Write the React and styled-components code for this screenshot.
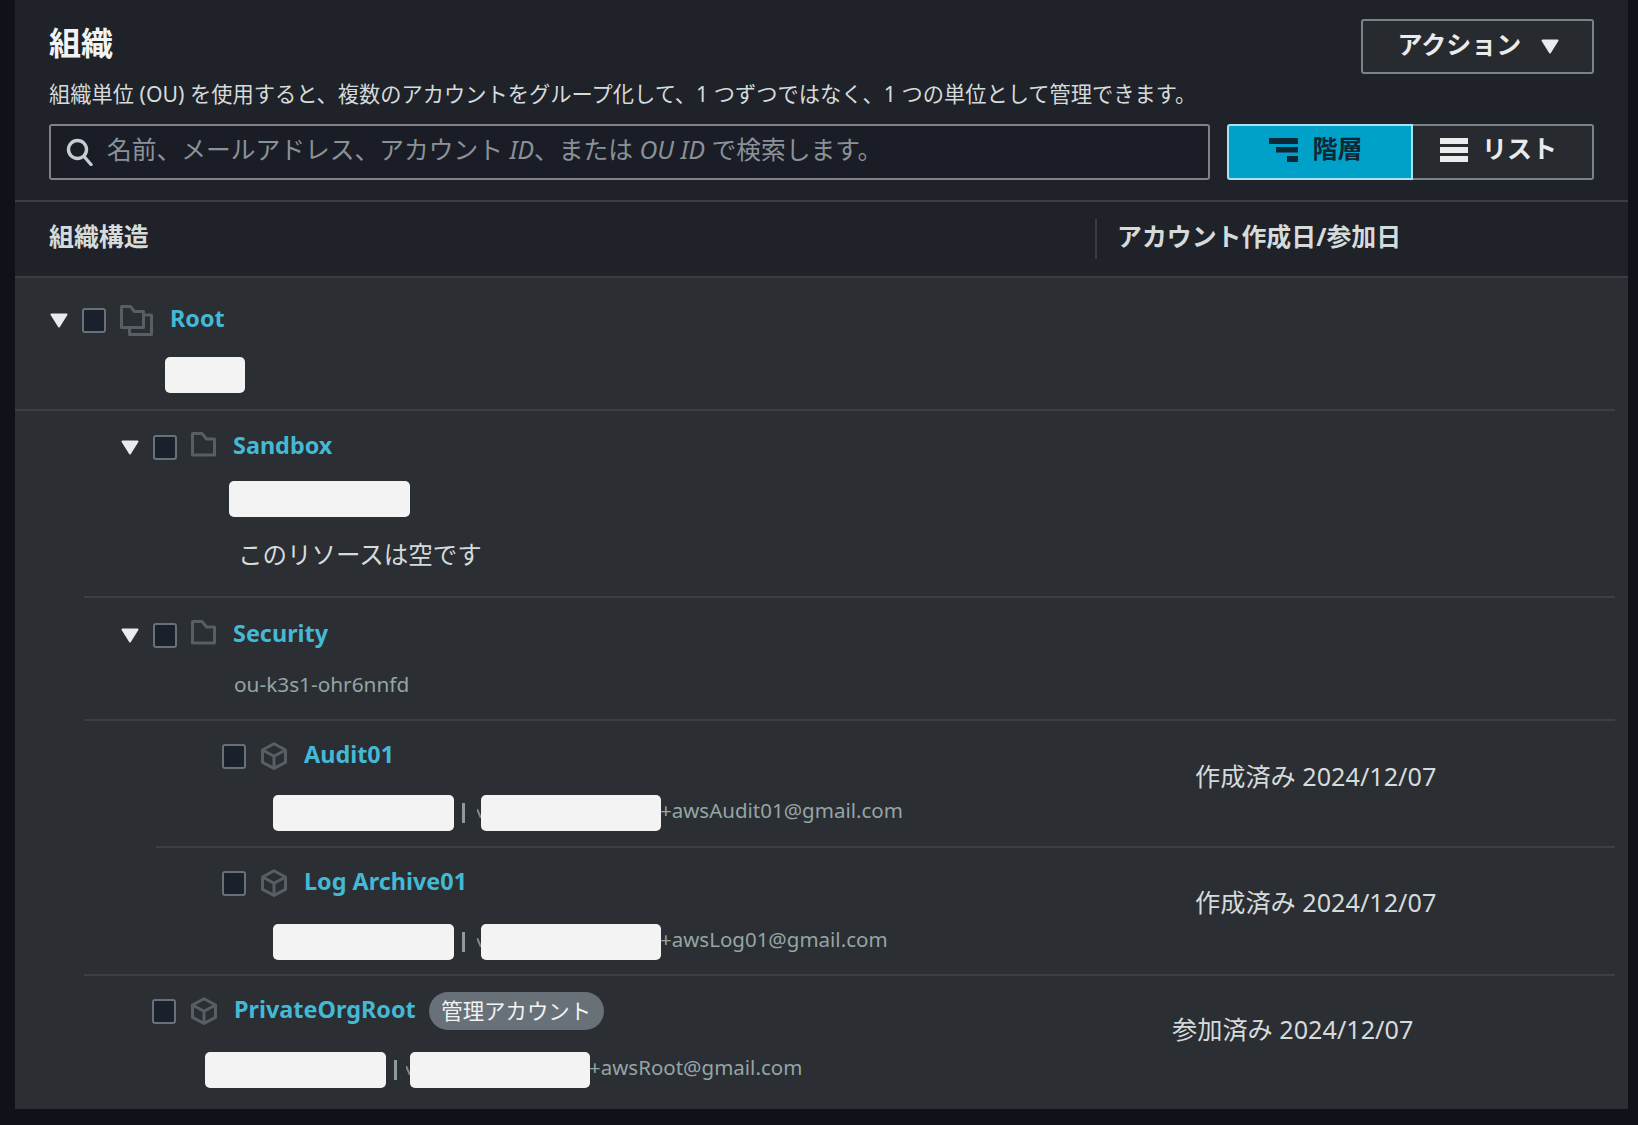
import React from "react";
import styled, { createGlobalStyle } from "styled-components";

const GlobalStyle = createGlobalStyle`
  html, body { margin: 0; padding: 0; background: #0f1218; }
  body { font-family: "Noto Sans", "Noto Sans CJK JP", sans-serif; color: #d5dbdb; }
  * { box-sizing: border-box; }
`;

const Page = styled.div`
  width: 1638px;
  height: 1125px;
  padding: 0 10px 16px 15px;
  background: #0f1218;
  overflow: hidden;
`;

const Panel = styled.div`
  height: 100%;
  display: flex;
  flex-direction: column;
  background: #2b2e33;
`;

const Header = styled.header`
  background: #1f2229;
  border-bottom: 2px solid #3a3d43;
`;

const Intro = styled.div`
  height: 202px;
  padding: 19px 34px 0 34px;
  border-bottom: 2px solid #3a3d43;
  display: flex;
  flex-direction: column;
`;

const TitleRow = styled.div`
  display: flex;
  justify-content: space-between;
  align-items: flex-start;
  height: 56px;
`;

const Title = styled.h1`
  margin: 0;
  font-size: 32px;
  line-height: 48px;
  font-weight: 700;
  color: #f2f3f3;
`;

const ActionButton = styled.button`
  width: 233px;
  height: 55px;
  display: flex;
  align-items: center;
  justify-content: center;
  gap: 20px;
  padding: 0 0 7px 2px;
  background: #272a2f;
  border: 2px solid #7d8288;
  border-radius: 3px;
  color: #e9ebed;
  font-family: inherit;
  font-size: 25px;
  font-weight: 700;
  svg { margin-top: 7px; }
`;

const Description = styled.p`
  margin: 1px 0 0;
  height: 48px;
  font-size: 21.25px;
  line-height: 36px;
  color: #d5dbdb;
`;

const Controls = styled.div`
  display: flex;
  gap: 17px;
`;

const SearchBox = styled.div`
  width: 1161px;
  height: 56px;
  display: flex;
  align-items: center;
  gap: 14px;
  padding: 0 0 8px 15px;
  background: #1a1d25;
  border: 2px solid #7f8389;
  border-radius: 3px;
  color: #8a9299;
  font-size: 24.75px;
  em { font-style: italic; }
  svg { flex: none; margin-top: 8px; }
`;

const Toggle = styled.div`
  display: flex;
  height: 56px;
`;

const ToggleButton = styled.div`
  width: ${(p) => (p.$active ? "186px" : "181px")};
  height: 56px;
  display: flex;
  align-items: center;
  justify-content: center;
  gap: 14px;
  padding: 0 8px 10px 0;
  font-size: 25px;
  font-weight: 700;
  background: ${(p) => (p.$active ? "#00a1c9" : "#272a2f")};
  color: ${(p) => (p.$active ? "#0f2636" : "#e9ebed")};
  border: 2px solid ${(p) => (p.$active ? "#a8e1ef" : "#7d8288")};
  border-left-width: ${(p) => (p.$active ? "2px" : "0")};
  border-radius: ${(p) => (p.$active ? "3px 0 0 3px" : "0 3px 3px 0")};
  svg { margin-top: 6px; }
`;

const Columns = styled.div`
  height: 74px;
  display: grid;
  grid-template-columns: 1080px 1fr;
  align-items: center;
  font-size: 24.9px;
  font-weight: 700;
  color: #d5dbdb;
`;

const ColumnName = styled.div`
  height: 40px;
  line-height: 34px;
  padding-left: ${(p) => p.$pad}px;
  ${(p) => p.$divided && "border-left: 2px solid #3a3d43;"}
`;

const Tree = styled.div`
  flex: 1;
  padding-right: 13px;
`;

const Row = styled.div`
  height: ${(p) => p.$height}px;
  margin-left: ${(p) => p.$inset}px;
  padding-left: ${(p) => p.$pad}px;
  padding-top: ${(p) => p.$top}px;
  border-top: ${(p) => (p.$first ? "0" : "2px solid #3c3f45")};
  display: flex;
  justify-content: space-between;
`;

const Main = styled.div`
  display: flex;
  flex-direction: column;
`;

const TitleLine = styled.div`
  display: flex;
  align-items: center;
  height: 30px;
`;

const Caret = styled.svg`
  width: 18px;
  height: 15px;
  margin-right: 14px;
  flex: none;
`;

const Check = styled.span`
  width: 24px;
  height: 25px;
  flex: none;
  margin-right: 14px;
  background: #1a212d;
  border: 2.5px solid #687078;
  border-radius: 3px;
`;

const KindIcon = styled.svg`
  flex: none;
  margin-right: ${(p) => p.$after || 17}px;
  margin-top: ${(p) => p.$lift || 0}px;
  fill: none;
  stroke: #595d64;
  stroke-width: 3;
  stroke-linejoin: round;
`;

const Name = styled.a`
  padding-bottom: 4px;
  font-size: 23.4px;
  font-weight: 700;
  color: #44b9d6;
  white-space: nowrap;
`;

const Badge = styled.span`
  margin-left: 13px;
  width: 175px;
  height: 38px;
  display: flex;
  align-items: center;
  justify-content: center;
  padding-bottom: 3px;
  background: #687078;
  border-radius: 19px;
  color: #f2f3f3;
  font-size: 21.4px;
  white-space: nowrap;
`;

const MetaLine = styled.div`
  display: flex;
  align-items: center;
  height: 36px;
  margin-top: ${(p) => p.$gap}px;
  margin-left: ${(p) => p.$indent}px;
  font-size: 20.5px;
  color: #95a5a6;
  white-space: nowrap;
`;

const Redacted = styled.span`
  display: block;
  width: ${(p) => p.$width}px;
  height: 36px;
  background: #f3f3f4;
  border-radius: 5px;
`;

const Pipe = styled.span`
  width: 3px;
  height: 20px;
  margin: 0 ${(p) => p.$after}px 0 8px;
  background: #8d9a9c;
`;

const Sliver = styled.svg`
  flex: none;
  fill: none;
  stroke: #7f8b8d;
  stroke-width: 2;
`;

const Email = styled.span`
  margin-left: -1px;
  padding-bottom: 6px;
`;

const OuId = styled.span`
  margin-left: 1px;
  font-size: 20.8px;
`;

const Empty = styled.div`
  margin: 20px 0 0 117px;
  font-size: 24.5px;
  line-height: 36px;
  color: #d5dbdb;
`;

const DateCell = styled.div`
  width: ${(p) => p.$width}px;
  flex: none;
  margin-top: ${(p) => p.$top}px;
  font-size: 25.2px;
  line-height: 32px;
  color: #d5dbdb;
  white-space: nowrap;
`;

const Triangle = ({ fill = "#e9ebed" }) => (
  <Caret viewBox="0 0 18 15">
    <path d="M1.5 1.5h15L9 13.5z" fill={fill} stroke={fill} strokeWidth="2" strokeLinejoin="round" />
  </Caret>
);

const FolderIcon = () => (
  <KindIcon width="25" height="26" viewBox="0 0 25 26" $lift={-4}>
    <path d="M1.5 1.5h9.5l4.5 5.5h8v16H1.5z" />
  </KindIcon>
);

const FoldersIcon = () => (
  <KindIcon width="33" height="31" viewBox="0 0 33 31">
    <path d="M1.5 1.5h9l4 5h9v16h-22z" />
    <path d="M23.5 10h8v19.5h-22v-7" />
  </KindIcon>
);

const CubeIcon = () => (
  <KindIcon width="28" height="28" viewBox="0 0 28 28" $after={16}>
    <path d="M14 1.8 25.5 8v12.4L14 26.4 2.5 20.4V8z" />
    <path d="M2.5 8 14 14.2 25.5 8M14 14.2v12.2" />
  </KindIcon>
);

const SearchIcon = () => (
  <svg width="27" height="28" viewBox="0 0 27 28" fill="none" stroke="#c6ccd0" strokeWidth="3.4">
    <circle cx="11.5" cy="11.5" r="9" />
    <path d="M18 18.5 25 26.5" strokeLinecap="round" />
  </svg>
);

const HierarchyIcon = () => (
  <svg width="29" height="24" viewBox="0 0 29 24" fill="#0f2636">
    <rect x="0" y="0" width="29" height="6" />
    <rect x="7" y="9" width="22" height="5.5" />
    <rect x="18" y="18" width="11" height="6" />
  </svg>
);

const ListIcon = () => (
  <svg width="28" height="24" viewBox="0 0 28 24" fill="#e9ebed">
    <rect y="0" width="28" height="6" />
    <rect y="9" width="28" height="6" />
    <rect y="18" width="28" height="6" />
  </svg>
);

const AccountMeta = ({ email, gap, indent, after = 12 }) => (
  <MetaLine $gap={gap} $indent={indent}>
    <Redacted $width={181} />
    <Pipe $after={after} />
    <Sliver width="4" height="9" viewBox="0 0 4 9">
      <path d="M0 0 4 9" />
    </Sliver>
    <Redacted $width={180} />
    <Email>{email}</Email>
  </MetaLine>
);

export default function App() {
  return (
    <Page>
      <GlobalStyle />
      <Panel>
        <Header>
          <Intro>
            <TitleRow>
              <Title>組織</Title>
              <ActionButton>
                アクション
                <svg width="18" height="15" viewBox="0 0 18 15">
                  <path d="M1.5 1.5h15L9 13.5z" fill="#e9ebed" stroke="#e9ebed" strokeWidth="2" strokeLinejoin="round" />
                </svg>
              </ActionButton>
            </TitleRow>
            <Description>
              組織単位 (OU) を使用すると、複数のアカウントをグループ化して、1 つずつではなく、1 つの単位として管理できます。
            </Description>
            <Controls>
              <SearchBox>
                <SearchIcon />
                <span>
                  名前、メールアドレス、アカウント <em>ID</em>、または <em>OU ID</em> で検索します。
                </span>
              </SearchBox>
              <Toggle>
                <ToggleButton $active>
                  <HierarchyIcon />
                  階層
                </ToggleButton>
                <ToggleButton>
                  <ListIcon />
                  リスト
                </ToggleButton>
              </Toggle>
            </Controls>
          </Intro>
          <Columns>
            <ColumnName $pad={34}>組織構造</ColumnName>
            <ColumnName $pad={20} $divided>
              アカウント作成日/参加日
            </ColumnName>
          </Columns>
        </Header>
        <Tree>
          <Row $first $height={131} $inset={0} $pad={35} $top={27}>
            <Main>
              <TitleLine>
                <Triangle />
                <Check />
                <FoldersIcon />
                <Name>Root</Name>
              </TitleLine>
              <MetaLine $gap={22} $indent={115}>
                <Redacted $width={80} />
              </MetaLine>
            </Main>
          </Row>
          <Row $height={187} $inset={0} $pad={106} $top={21}>
            <Main>
              <TitleLine>
                <Triangle />
                <Check />
                <FolderIcon />
                <Name>Sandbox</Name>
              </TitleLine>
              <MetaLine $gap={19} $indent={108}>
                <Redacted $width={181} />
              </MetaLine>
              <Empty>このリソースは空です</Empty>
            </Main>
          </Row>
          <Row $height={123} $inset={69} $pad={37} $top={22}>
            <Main>
              <TitleLine>
                <Triangle />
                <Check />
                <FolderIcon />
                <Name>Security</Name>
              </TitleLine>
              <MetaLine $gap={16} $indent={112}>
                <OuId>ou-k3s1-ohr6nnfd</OuId>
              </MetaLine>
            </Main>
          </Row>
          <Row $height={127} $inset={69} $pad={138} $top={20}>
            <Main>
              <TitleLine>
                <Check />
                <CubeIcon />
                <Name>Audit01</Name>
              </TitleLine>
              <AccountMeta email="+awsAudit01@gmail.com" gap={24} indent={51} />
            </Main>
            <DateCell $width={420} $top={19}>作成済み 2024/12/07</DateCell>
          </Row>
          <Row $height={128} $inset={141} $pad={66} $top={20}>
            <Main>
              <TitleLine>
                <Check />
                <CubeIcon />
                <Name>Log Archive01</Name>
              </TitleLine>
              <AccountMeta email="+awsLog01@gmail.com" gap={26} indent={51} />
            </Main>
            <DateCell $width={420} $top={18}>作成済み 2024/12/07</DateCell>
          </Row>
          <Row $height={134} $inset={69} $pad={68} $top={20}>
            <Main>
              <TitleLine>
                <Check />
                <CubeIcon />
                <Name>PrivateOrgRoot</Name>
                <Badge>管理アカウント</Badge>
              </TitleLine>
              <AccountMeta email="+awsRoot@gmail.com" gap={26} indent={53} after={9} />
            </Main>
            <DateCell $width={443} $top={17}>参加済み 2024/12/07</DateCell>
          </Row>
        </Tree>
      </Panel>
    </Page>
  );
}
